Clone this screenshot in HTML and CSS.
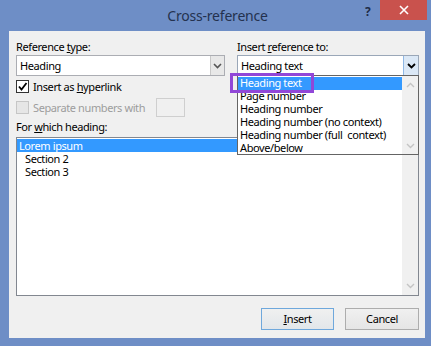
FILE: index.html
```html
<!DOCTYPE html>
<html>
<head>
<meta charset="utf-8">
<title>Cross-reference</title>
<link rel="stylesheet" href="styles.css">
</head>
<body>
<div class="window">
  <div class="titlebar">
    <span class="title">Cross-reference</span>
    <span class="help">?</span>
    <span class="close"><svg width="10" height="10" viewBox="0 0 10 10"><path d="M1 1 L9 9 M9 1 L1 9" stroke="#fff" stroke-width="1.6"/></svg></span>
  </div>
  <div class="client">
    <div class="top">
      <div class="col">
        <div class="label">Reference <u>t</u>ype:</div>
        <div class="combo">
          <span class="value">Heading</span>
          <span class="arrow"><svg width="9" height="6" viewBox="0 0 9 6"><path d="M1 1 L4.5 4.5 L8 1" fill="none" stroke="#555" stroke-width="1.6"/></svg></span>
        </div>
        <div class="check">
          <span class="box"><svg width="11" height="11" viewBox="0 0 11 11"><path d="M2 5.5 L4.5 8.5 L9.5 2" fill="none" stroke="#000" stroke-width="1.8"/></svg></span>
          <span>Insert as <u>h</u>yperlink</span>
        </div>
        <div class="check disabled">
          <span class="box"></span>
          <span>Separate numbers with</span>
          <span class="sep-input"></span>
        </div>
      </div>
      <div class="col right">
        <div class="label">Insert <u>r</u>eference to:</div>
        <div class="combo active">
          <span class="value">Heading text</span>
          <span class="arrow"><svg width="9" height="6" viewBox="0 0 9 6"><path d="M1 1 L4.5 4.5 L8 1" fill="none" stroke="#000" stroke-width="1.8"/></svg></span>
        </div>
        <div class="dropdown">
          <div class="items">
            <div class="item selected">Heading text</div>
            <div class="item">Page number</div>
            <div class="item">Heading number</div>
            <div class="item">Heading number (no context)</div>
            <div class="item">Heading number (full&nbsp; context)</div>
            <div class="item">Above/below</div>
          </div>
          <div class="scrollbar">
            <svg width="9" height="6" viewBox="0 0 9 6"><path d="M1 5 L4.5 1.5 L8 5" fill="none" stroke="#c4c4c4" stroke-width="1.4"/></svg>
            <svg width="9" height="6" viewBox="0 0 9 6"><path d="M1 1 L4.5 4.5 L8 1" fill="none" stroke="#c4c4c4" stroke-width="1.4"/></svg>
          </div>
        </div>
        <div class="mark"></div>
      </div>
    </div>
    <div class="label heading-label">For <u>w</u>hich heading:</div>
    <div class="listbox">
      <div class="items">
        <div class="item selected">Lorem ipsum</div>
        <div class="item sub">Section 2</div>
        <div class="item sub">Section 3</div>
      </div>
      <div class="scrollbar">
        <svg width="9" height="6" viewBox="0 0 9 6"><path d="M1 5 L4.5 1.5 L8 5" fill="none" stroke="#c4c4c4" stroke-width="1.4"/></svg>
        <svg width="9" height="6" viewBox="0 0 9 6"><path d="M1 1 L4.5 4.5 L8 1" fill="none" stroke="#c4c4c4" stroke-width="1.4"/></svg>
      </div>
    </div>
    <div class="buttons">
      <div class="btn default"><u>I</u>nsert</div>
      <div class="btn">Cancel</div>
    </div>
  </div>
</div>
</body>
</html>
```
FILE: styles.css
```css
* { box-sizing: border-box; }
html, body { margin: 0; padding: 0; }
body {
  width: 431px;
  height: 346px;
  overflow: hidden;
  font-family: "Noto Sans", "Open Sans", sans-serif;
  font-size: 11px;
  letter-spacing: -0.4px;
  color: #000;
  background: #6e8ec6;
}
u { text-decoration: underline; text-underline-offset: 1px; }

.window {
  width: 431px;
  height: 346px;
  background: #6e8ec6;
  display: flex;
  flex-direction: column;
}

.titlebar {
  height: 31px;
  position: relative;
  display: flex;
  align-items: flex-start;
  justify-content: center;
}
.title {
  margin-top: 6px;
  margin-left: 4px;
  font-size: 14px;
  color: #24324f;
  letter-spacing: -0.2px;
}
.help {
  position: absolute;
  left: 365px;
  top: 3px;
  font-size: 12px;
  font-weight: bold;
  color: #1e2c48;
}
.close {
  position: absolute;
  left: 380px;
  top: 0;
  width: 47px;
  height: 20px;
  background: #c9524d;
  display: flex;
  align-items: center;
  justify-content: center;
}

.client {
  margin-left: 9px;
  width: 416px;
  height: 307px;
  background: #f0f0f0;
  padding: 8px 6px 0 7px;
  display: flex;
  flex-direction: column;
}

.top {
  display: grid;
  grid-template-columns: 209px 182px;
  column-gap: 12px;
}
.col { position: relative; display: flex; flex-direction: column; }

.label {
  height: 16px;
  line-height: 16px;
  white-space: nowrap;
}

.combo {
  height: 21px;
  border: 1px solid #abadb3;
  background: #fff;
  display: flex;
  align-items: stretch;
}
.combo .value {
  flex: 1;
  padding-left: 3px;
  line-height: 19px;
}
.combo .arrow {
  width: 14px;
  background: #e8e8e8;
  border-left: 1px solid #c8c8c8;
  display: flex;
  align-items: center;
  justify-content: center;
}
.combo.active { border-color: #9aa7b8; }
.combo.active .arrow {
  width: 15px;
  background: #dbe8f6;
  border-left: 1px solid #8fb8e6;
}

.check {
  display: flex;
  align-items: center;
  gap: 4px;
  height: 17px;
  margin-top: 2px;
  white-space: nowrap;
}
.check .box {
  width: 13px;
  height: 13px;
  border: 1px solid #333;
  background: #fff;
  display: flex;
  align-items: center;
  justify-content: center;
}
.check.disabled {
  height: 21px;
  margin-top: 2px;
  color: #9d9d9d;
}
.check.disabled .box {
  border-color: #c6c6c6;
  background: #e6e6e6;
}
.sep-input {
  width: 29px;
  height: 19px;
  margin-left: 7px;
  border: 1px solid #cfcfcf;
  background: #f0f0f0;
}

.dropdown {
  position: absolute;
  left: 0;
  top: 36px;
  width: 182px;
  height: 80px;
  border: 1px solid #646464;
  background: #fff;
  display: flex;
  z-index: 2;
}
.dropdown .items {
  flex: 1;
  padding: 1px 0 0 0;
}
.dropdown .item {
  height: 13px;
  line-height: 12px;
  padding-left: 2px;
  white-space: nowrap;
}
.item.selected {
  background: #3399ff;
  color: #fff;
}
.scrollbar {
  width: 16px;
  background: #f0f0f0;
  display: flex;
  flex-direction: column;
  justify-content: space-between;
  align-items: center;
  padding: 6px 0 5px;
}
.mark {
  position: absolute;
  left: -7px;
  top: 34px;
  width: 84px;
  height: 20px;
  border: 3px solid #9147d8;
  z-index: 3;
}

.heading-label { margin-top: 1px; }

.listbox {
  margin-top: 2px;
  height: 159px;
  border: 1px solid #828790;
  background: #fff;
  display: flex;
}
.listbox .items { flex: 1; padding-top: 1px; }
.listbox .item {
  height: 13px;
  line-height: 13px;
  padding-left: 2px;
  white-space: nowrap;
}
.listbox .item.sub { padding-left: 8px; }
.listbox .scrollbar { padding: 5px 0 6px; }

.buttons {
  margin-top: 12px;
  display: flex;
  justify-content: flex-end;
  gap: 11px;
}
.btn {
  width: 74px;
  height: 22px;
  border: 1px solid #adadad;
  background: linear-gradient(#f0f0f0, #e5e5e5);
  text-align: center;
  line-height: 20px;
}
.btn.default {
  width: 73px;
  border-color: #6fa8dc;
  background: linear-gradient(#f0f0f0, #e2e6ea);
}
```
